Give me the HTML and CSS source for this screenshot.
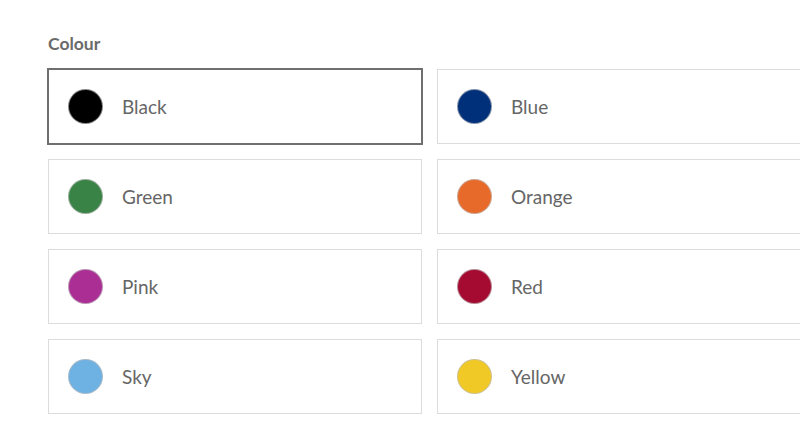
FILE: index.html
```html
<!DOCTYPE html>
<html lang="en">
<head>
<meta charset="utf-8">
<title>Colour</title>
<link rel="stylesheet" href="styles.css">
</head>
<body>
<section class="picker">
  <h2 class="picker-title">Colour</h2>
  <div class="options">
    <label class="option is-selected"><span class="swatch swatch-black"></span><span class="name">Black</span></label>
    <label class="option"><span class="swatch swatch-blue"></span><span class="name">Blue</span></label>
    <label class="option"><span class="swatch swatch-green"></span><span class="name">Green</span></label>
    <label class="option"><span class="swatch swatch-orange"></span><span class="name">Orange</span></label>
    <label class="option"><span class="swatch swatch-pink"></span><span class="name">Pink</span></label>
    <label class="option"><span class="swatch swatch-red"></span><span class="name">Red</span></label>
    <label class="option"><span class="swatch swatch-sky"></span><span class="name">Sky</span></label>
    <label class="option"><span class="swatch swatch-yellow"></span><span class="name">Yellow</span></label>
  </div>
</section>
</body>
</html>
```
FILE: styles.css
```css
html, body {
  margin: 0;
  padding: 0;
  background: #fff;
  overflow: hidden;
}
body {
  font-family: Lato, "Open Sans", sans-serif;
  color: #666;
}
.picker {
  padding: 33px 0 0 48px;
  width: 764px;
}
.picker-title {
  margin: 0 0 14px;
  font-size: 17.5px;
  font-weight: 700;
  line-height: 22px;
  color: #6a6a6a;
}
.options {
  display: grid;
  grid-template-columns: 374px 374px;
  column-gap: 15px;
  row-gap: 15px;
}
.option {
  box-sizing: border-box;
  height: 75px;
  border: 1px solid #dcdcdc;
  display: flex;
  align-items: center;
  padding-left: 19px;
  background: #fff;
}
.option.is-selected {
  border-color: #6f6f6f;
  box-shadow: 0 0 0 1px #6f6f6f;
}
.swatch {
  width: 35px;
  height: 35px;
  border-radius: 50%;
  box-sizing: border-box;
  border: 1px solid rgba(190, 190, 190, 0.7);
  flex: none;
}
.swatch-black { background: #000; }
.swatch-blue { background: #00307a; }
.swatch-green { background: #3a8346; }
.swatch-orange { background: #e86a2b; }
.swatch-pink { background: #aa2e94; }
.swatch-red { background: #a50a30; }
.swatch-sky { background: #6eb1e3; }
.swatch-yellow { background: #f1c927; }
.name {
  margin-left: 19px;
  font-size: 19px;
  color: #666;
}
```
